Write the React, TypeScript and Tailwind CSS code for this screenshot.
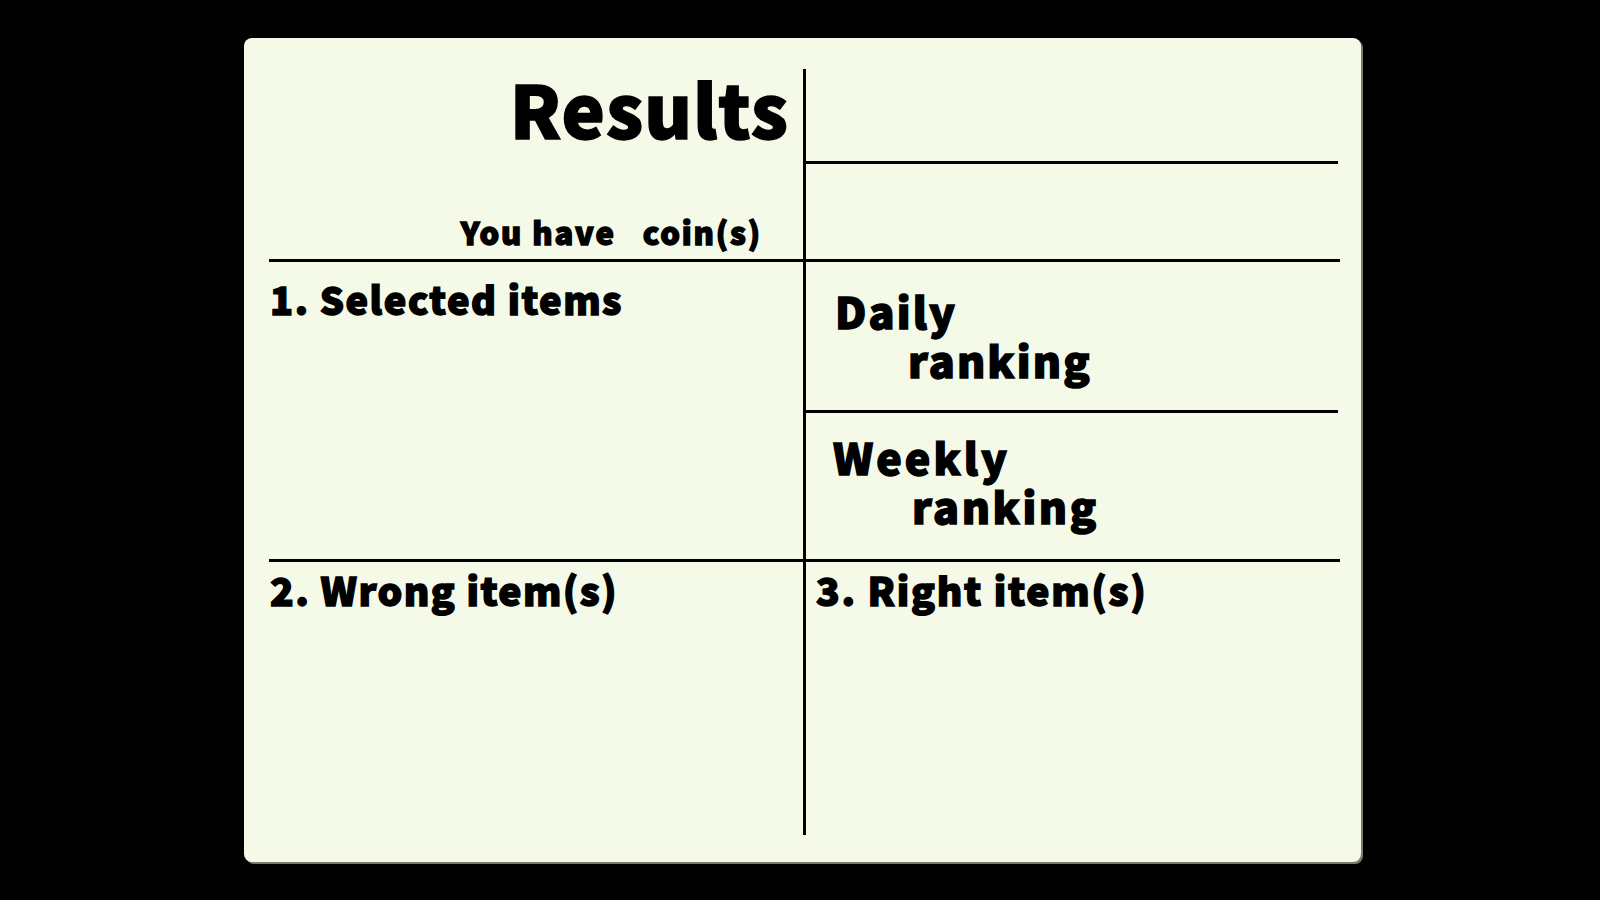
const font = { fontFamily: '"Noto Sans CJK JP", "Noto Sans", sans-serif' };

export default function App() {
  return (
    <div className="min-h-screen w-full bg-black overflow-hidden" style={font}>
      <div className="ml-[244px] pt-[38px]">
        <div className="w-[1117px] h-[824px] rounded-lg bg-[#f5fae8] shadow-[2px_2px_0_0_#7a7a70] pl-[25px] pt-[31px] text-black font-black [-webkit-text-stroke:1.4px_black]">
          <div className="grid grid-cols-[534px_3px_534px] grid-rows-[193px_300px_273px]">
            {/* top left: title */}
            <div className="border-b-[3px] border-black flex flex-col items-end pr-[14px]">
              <div className="text-[73px] leading-none tracking-[1px] mt-[2px]">Results</div>
              <div className="mt-auto mb-[12px] mr-[27px] text-[31px] leading-none tracking-[0.06em] whitespace-pre">
                You have   coin(s)
              </div>
            </div>

            {/* vertical divider */}
            <div className="row-span-3 bg-black" />

            {/* top right: empty boxes */}
            <div className="border-b-[3px] border-black flex flex-col">
              <div className="h-[95px] border-b-[3px] border-black w-[532px]" />
            </div>

            {/* selected items */}
            <div className="border-b-[3px] border-black pl-[1px] pt-[18px]">
              <div className="text-[38px] leading-none tracking-[1.5px]">1. Selected items</div>
            </div>

            {/* rankings */}
            <div className="border-b-[3px] border-black flex flex-col">
              <div className="h-[151px] border-b-[3px] border-black w-[532px] pl-[29px] pt-[27px]">
                <div className="text-[43px] leading-none tracking-[0.05em]">Daily</div>
                <div className="text-[43px] leading-none tracking-[0.05em] mt-[6px] pl-[73px]">ranking</div>
              </div>
              <div className="pl-[27px] pt-[22px]">
                <div className="text-[43px] leading-none tracking-[0.07em]">Weekly</div>
                <div className="text-[43px] leading-none tracking-[0.06em] mt-[6px] pl-[79px]">ranking</div>
              </div>
            </div>

            {/* wrong items */}
            <div className="pl-[1px] pt-[8px]">
              <div className="text-[39px] leading-none tracking-[1.4px]">2. Wrong item(s)</div>
            </div>

            {/* right items */}
            <div className="pl-[10px] pt-[8px]">
              <div className="text-[39px] leading-none tracking-[1.7px]">3. Right item(s)</div>
            </div>
          </div>
        </div>
      </div>
    </div>
  );
}
